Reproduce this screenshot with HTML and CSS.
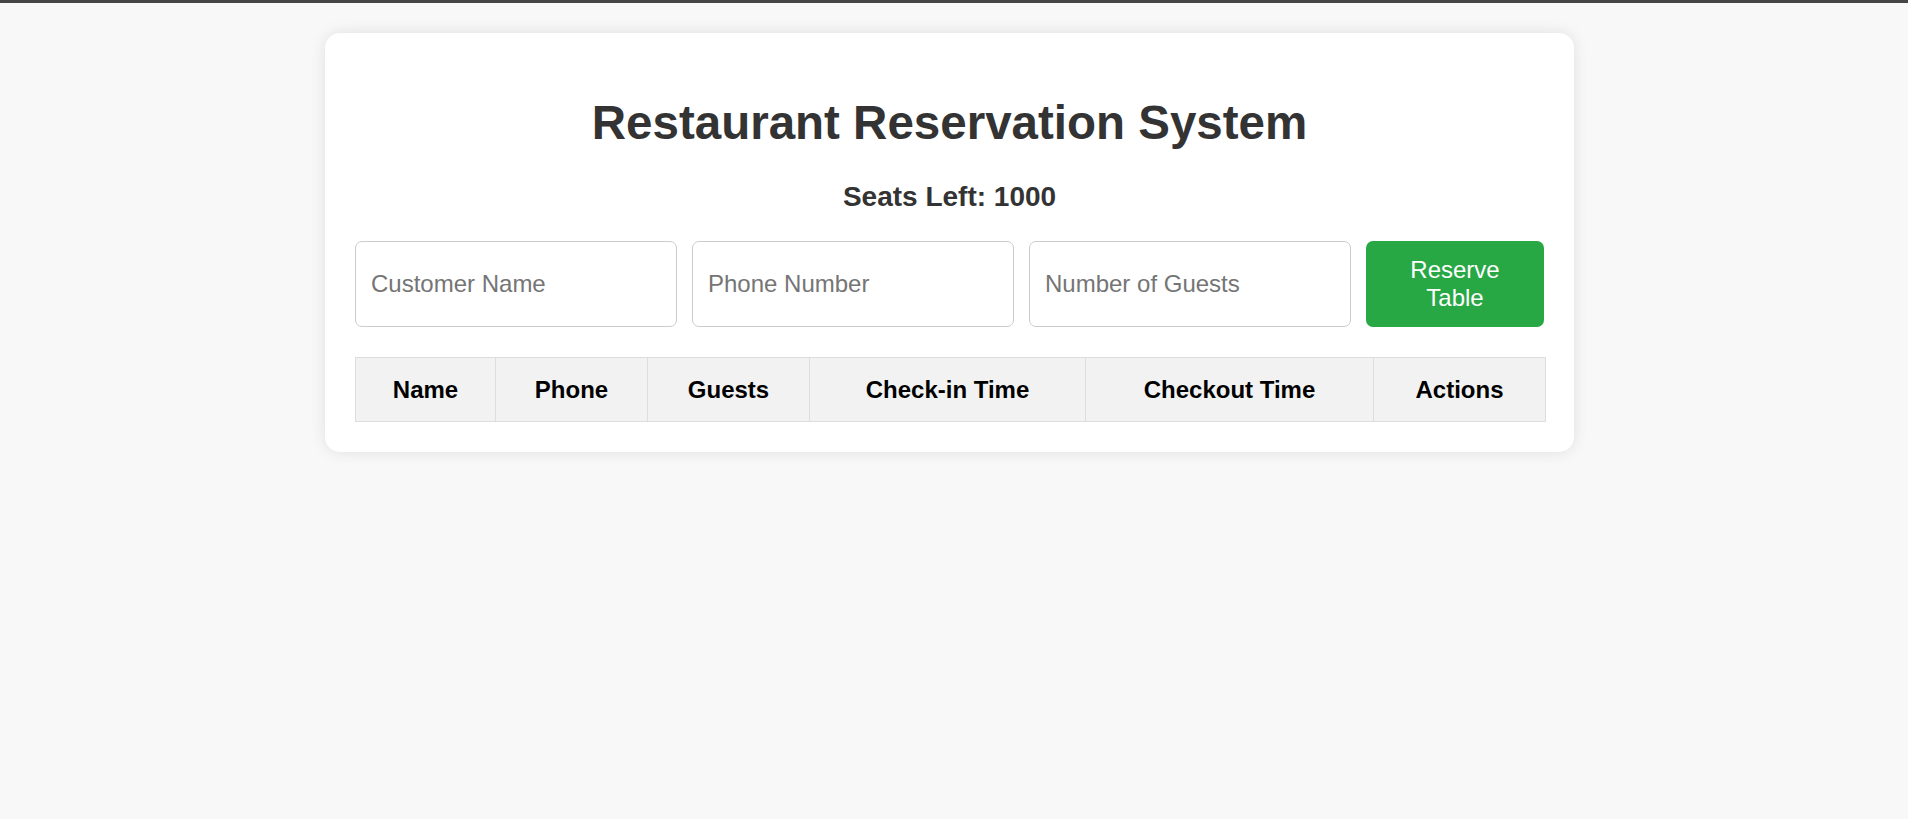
FILE: index.html
```html
<!DOCTYPE html>
<html lang="en">
<head>
<meta charset="UTF-8">
<title>Restaurant Reservation System</title>
<link rel="stylesheet" href="styles.css">
</head>
<body>
<div class="topbar"></div>
<div class="page">
  <div class="card">
    <h1 class="title">Restaurant Reservation System</h1>
    <h3 class="seats">Seats Left: 1000</h3>
    <div class="form-row">
      <input class="field" type="text" placeholder="Customer Name">
      <input class="field" type="text" placeholder="Phone Number">
      <input class="field" type="text" placeholder="Number of Guests">
      <button class="reserve-btn">Reserve Table</button>
    </div>
    <table class="res-table">
      <colgroup>
        <col class="c-name">
        <col class="c-phone">
        <col class="c-guests">
        <col class="c-checkin">
        <col class="c-checkout">
        <col class="c-actions">
      </colgroup>
      <thead>
        <tr>
          <th>Name</th>
          <th>Phone</th>
          <th>Guests</th>
          <th>Check-in Time</th>
          <th>Checkout Time</th>
          <th>Actions</th>
        </tr>
      </thead>
      <tbody></tbody>
    </table>
  </div>
</div>
</body>
</html>
```

FILE: styles.css
```css
* {
  box-sizing: border-box;
}

html, body {
  margin: 0;
  padding: 0;
}

body {
  background: #f8f8f8;
  font-family: "Liberation Sans", Arial, sans-serif;
  padding-right: 9px;
  min-height: 819px;
}

.topbar {
  height: 3px;
  background: #454545;
  margin-right: -9px;
}

.page {
  padding-top: 30px;
}

.card {
  width: 1249px;
  margin: 0 auto;
  background: #fff;
  border-radius: 15px;
  box-shadow: 0 0 15px rgba(0, 0, 0, 0.1);
  padding: 30px;
}

.title {
  margin: 32px 0 0;
  text-align: center;
  font-size: 47.5px;
  font-weight: bold;
  color: #333;
  line-height: 55px;
}

.seats {
  margin: 31px 0 28px;
  text-align: center;
  font-size: 28px;
  font-weight: bold;
  color: #333;
  line-height: 32px;
}

.form-row {
  display: flex;
  gap: 15px;
  margin-bottom: 30px;
}

.field {
  flex: 1 1 0;
  min-width: 0;
  height: 86px;
  border: 1px solid #ccc;
  border-radius: 7px;
  padding: 0 15px;
  font-family: "Liberation Sans", Arial, sans-serif;
  font-size: 24px;
  color: #333;
  background: #fff;
  outline: none;
}

.field::placeholder {
  color: #757575;
}

.reserve-btn {
  flex: 0 0 178px;
  height: 86px;
  border: none;
  border-radius: 7px;
  background: #28a745;
  color: #fff;
  font-family: "Liberation Sans", Arial, sans-serif;
  font-size: 24px;
  line-height: 28px;
  padding: 0 30px;
}

.res-table {
  width: 100%;
  border-collapse: collapse;
  table-layout: fixed;
}

.c-name { width: 140px; }
.c-phone { width: 152px; }
.c-guests { width: 162px; }
.c-checkin { width: 276px; }
.c-checkout { width: 288px; }
.c-actions { width: 172px; }

.res-table th {
  background: #f2f2f2;
  border: 1px solid #ddd;
  height: 64px;
  padding: 0 12px;
  font-size: 24px;
  font-weight: bold;
  color: #000;
  text-align: center;
}
```
